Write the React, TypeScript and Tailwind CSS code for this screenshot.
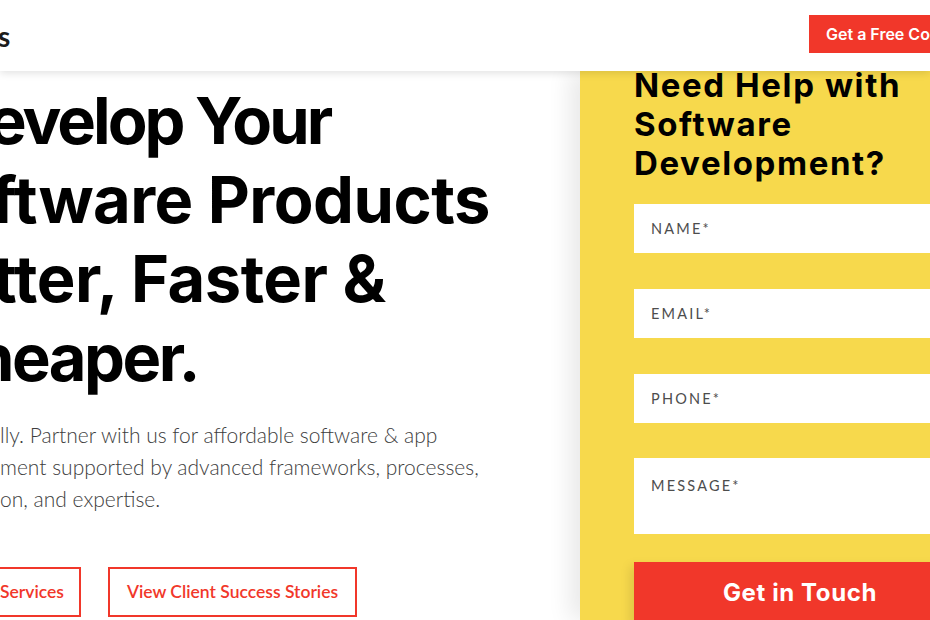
const labels = ['NAME*', 'EMAIL*', 'PHONE*'];

export default function App() {
  return (
    <div className="w-[930px] h-[620px] overflow-hidden bg-white font-['Lato','Liberation_Sans',sans-serif]">
      <header className="relative z-20 h-[71px] bg-white shadow-[0_2px_8px_rgba(0,0,0,0.12)] flex items-center justify-between">
        <span className="text-[28px] font-bold text-[#1c1c1c] -ml-[2px] leading-none">s</span>
        <button className="h-[38px] w-[140px] -mt-[3px] bg-[#f1372a] text-white font-['Inter',sans-serif] font-semibold text-[16px] pl-[17px] text-left whitespace-nowrap overflow-hidden -mr-[19px]">
          Get a Free Consultation
        </button>
      </header>

      <div className="flex h-[549px]">
        <section className="w-[580px] shrink-0 pt-[10px]">
          <h1 className="font-['Inter',sans-serif] font-bold text-[65px] leading-[79px] text-black tracking-[-0.5px] whitespace-nowrap">
            <span className="block -ml-[12px] tracking-[-3px]">evelop Your</span>
            <span className="block -ml-[9px]">ftware Products</span>
            <span className="block -ml-[7px]">tter, Faster &amp;</span>
            <span className="block -ml-[26px] tracking-[-2.5px]">heaper.</span>
          </h1>
          <p className="mt-[22px] text-[21px] leading-[32px] font-light text-[#3d3d3d] whitespace-nowrap">
            lly. Partner with us for affordable software &amp; app
            <br />
            ment supported by advanced frameworks, processes,
            <br />
            on, and expertise.
          </p>
          <div className="mt-[52px] flex gap-[27px]">
            <button className="h-[50px] -ml-[20px] pl-[18px] pr-[15px] border-2 border-[#f1372a] text-[#f1372a] font-semibold text-[17.5px]">
              Services
            </button>
            <button className="h-[50px] px-[17px] border-2 border-[#f1372a] text-[#f1372a] font-semibold text-[17.5px]">
              View Client Success Stories
            </button>
          </div>
        </section>

        <aside className="relative z-10 w-[400px] shrink-0 bg-[#f7d94c] pl-[54px] shadow-[-10px_0_22px_rgba(0,0,0,0.09)]">
          <h2 className="font-['Inter',sans-serif] text-[33px] leading-[39px] font-bold text-black tracking-[1.6px] -mt-[5px]">
            Need Help with
            <br />
            Software
            <br />
            Development?
          </h2>
          <form className="mt-[21px] flex flex-col gap-[36px] w-[332px]">
            {labels.map((l) => (
              <div key={l} className="h-[49px] bg-white flex items-center px-[17px] text-[14.5px] tracking-[2.2px] text-[#4d4d4d]">
                {l}
              </div>
            ))}
            <div className="h-[76px] bg-white px-[17px] pt-[17px] text-[14.5px] tracking-[2.2px] text-[#4d4d4d] -mt-[1px]">
              MESSAGE*
            </div>
          </form>
          <button className="mt-[28px] w-[332px] h-[62px] bg-[#f1372a] text-white font-['Inter',sans-serif] font-bold text-[24px] tracking-[0.6px] shadow-[-4px_4px_10px_rgba(0,0,0,0.1)]">
            Get in Touch
          </button>
        </aside>
      </div>
    </div>
  );
}
